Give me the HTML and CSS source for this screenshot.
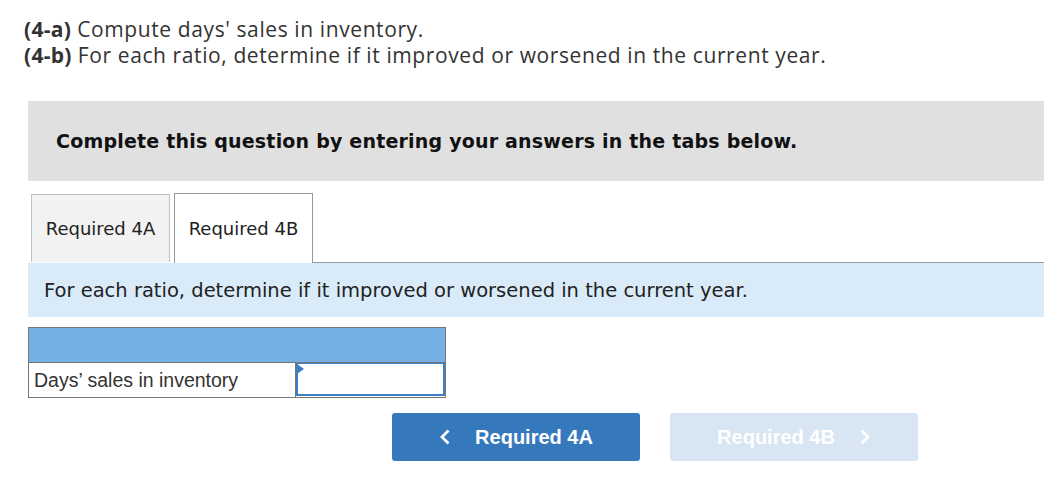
FILE: index.html
```html
<!DOCTYPE html>
<html>
<head>
<meta charset="utf-8">
<link rel="stylesheet" href="styles.css">
</head>
<body>
<div class="intro">
  <p><b>(4-a)</b> Compute days' sales in inventory.</p>
  <p><b>(4-b)</b> For each ratio, determine if it improved or worsened in the current year.</p>
</div>
<div class="panel">
  <div class="banner">Complete this question by entering your answers in the tabs below.</div>
  <div class="tabs">
    <div class="tab">Required 4A</div>
    <div class="tab active">Required 4B</div>
    <div class="tab-rest"></div>
  </div>
  <div class="info">For each ratio, determine if it improved or worsened in the current year.</div>
  <div class="grid">
    <div class="grid-head"></div>
    <div class="grid-row">
      <div class="label">Days’ sales in inventory</div>
      <div class="input-cell"><div class="input"><span class="flag"></span></div></div>
    </div>
  </div>
  <div class="nav">
    <div class="btn prev">
      <svg class="chev" width="12" height="18" viewBox="0 0 12 18"><path d="M9.5 2.5 L3 9 L9.5 15.5" fill="none" stroke="#fff" stroke-width="2.8"/></svg>
      <span>Required 4A</span>
    </div>
    <div class="btn next">
      <span>Required 4B</span>
      <svg class="chev" width="12" height="18" viewBox="0 0 12 18"><path d="M2.5 2.5 L9 9 L2.5 15.5" fill="none" stroke="#fff" stroke-width="2.8"/></svg>
    </div>
  </div>
</div>
</body>
</html>
```
FILE: styles.css
```css
html, body { margin: 0; padding: 0; background: #fff; }
body { width: 1044px; overflow: hidden; }
.intro {
  padding: 16px 0 0 24px;
  font-family: "Open Sans", "Liberation Sans", sans-serif;
  font-size: 21px;
  letter-spacing: 0.6px;
  color: #333;
  line-height: 26px;
}
.intro p { margin: 0; }
.intro b { font-weight: 700; letter-spacing: 0.3px; }
.panel { margin: 33px 0 0 28px; }
.banner {
  background: #e0e0e0;
  height: 80px;
  display: flex;
  align-items: center;
  padding-left: 28px;
  font-family: "DejaVu Sans", Verdana, sans-serif;
  font-weight: bold;
  font-size: 19px;
  letter-spacing: 0.2px;
  color: #111;
}
.tabs {
  display: flex;
  align-items: flex-end;
  margin-top: 11px;
  height: 71px;
}
.tab {
  font-family: "DejaVu Sans", Verdana, sans-serif;
  font-size: 18px;
  color: #222;
  height: 68px;
  box-sizing: border-box;
  display: flex;
  align-items: center;
  justify-content: center;
  border: 1px solid #c0c0c0;
  border-bottom: none;
  background: #f2f2f2;
  width: 139px;
  margin-left: 3px;
  margin-bottom: 1px;
}
.tab.active {
  background: #fff;
  border: 1px solid #999;
  border-bottom: none;
  margin-left: 4px;
  margin-bottom: 0;
  height: 70px;
}
.tab-rest { flex: 1; border-bottom: 1px solid #999; align-self: flex-end; }
.info {
  background: #d9ebf9;
  height: 54px;
  display: flex;
  align-items: center;
  padding-left: 16px;
  font-family: "DejaVu Sans", Verdana, sans-serif;
  font-size: 19.5px;
  color: #222;
}
.grid {
  margin-top: 10px;
  width: 418px;
  box-sizing: border-box;
  border: 1px solid #777;
}
.grid-head { background: #76afe5; height: 34px; border-bottom: 1px solid #777; }
.grid-row { display: flex; height: 34px; }
.label {
  width: 267px;
  border-right: 1px solid #777;
  font-family: "Liberation Sans", Arial, sans-serif;
  font-size: 19.5px;
  color: #333;
  display: flex;
  align-items: center;
  padding-left: 5px;
  box-sizing: border-box;
}
.input-cell { flex: 1; padding: 0; }
.input {
  position: relative;
  height: 33px;
  box-sizing: border-box;
  border: 2px solid #3d7fc4;
  border-top-width: 1px;
  background: #fff;
}
.flag {
  position: absolute;
  left: -1px;
  top: 0;
  width: 0; height: 0;
  border-top: 5px solid transparent;
  border-bottom: 5px solid transparent;
  border-left: 7px solid #3d7fc4;
}
.nav {
  display: flex;
  gap: 30px;
  margin: 15px 0 0 364px;
}
.btn {
  width: 248px;
  height: 48px;
  border-radius: 3px;
  display: flex;
  align-items: center;
  justify-content: center;
  gap: 24px;
  font-family: "Liberation Sans", Arial, sans-serif;
  font-weight: bold;
  font-size: 20px;
  color: #fff;
}
.btn.prev { background: #3579bc; }
.btn.next { background: #d8e5f2; }
.chev { display: block; }
```
